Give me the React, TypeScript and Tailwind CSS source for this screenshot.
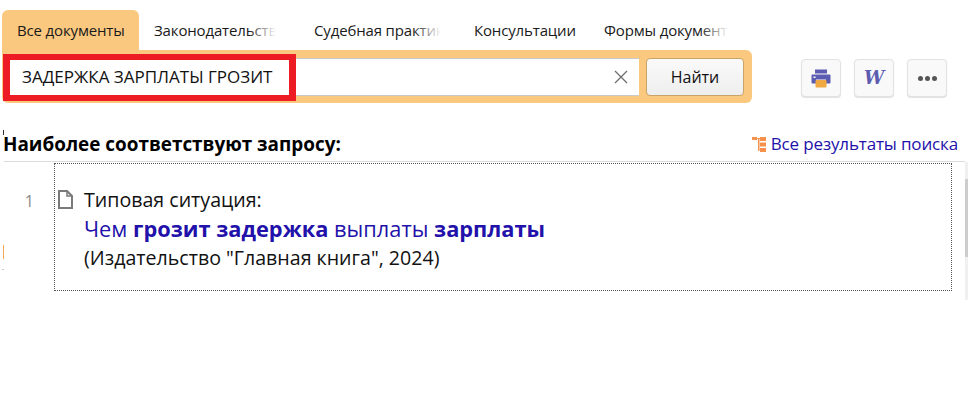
import React from "react";

const font = "font-['Open_Sans','Noto_Sans',sans-serif]";

function Tab({ label, width, clip, active, fade }: { label: string; width: string; clip?: string; active?: boolean; fade?: boolean }) {
  return (
    <div className={`flex h-full items-center whitespace-nowrap pl-[15px] text-[15px] tracking-[-0.15px] text-[#1a1a1a] ${width} ${active ? "rounded-t-[6px] bg-[#fac87f]" : ""}`}>
      <div className={`relative overflow-hidden ${clip ?? ""}`}>
        {label}
        {fade && <div className="absolute right-0 top-0 h-full w-[28px] bg-gradient-to-r from-white/0 to-white" />}
      </div>
    </div>
  );
}

function ToolButton({ children }: { children: React.ReactNode }) {
  return (
    <button className="flex h-[38px] w-[40px] items-center justify-center rounded-[4px] border border-[#e2e2e2] bg-[#f9f9f9] shadow-[0_1px_1px_rgba(0,0,0,0.12)]">
      {children}
    </button>
  );
}

function PrinterIcon() {
  return (
    <svg width="20" height="19" viewBox="0 0 20 19">
      <path d="M4 0.5h12v4H4z" fill="#5c5cb0" />
      <path d="M1.5 5.5h17a1 1 0 0 1 1 1v7a1 1 0 0 1-1 1H15v-4H5v4H1.5a1 1 0 0 1-1-1v-7a1 1 0 0 1 1-1z" fill="#5c5cb0" />
      <rect x="2.5" y="7.5" width="2" height="1.5" fill="#fff" />
      <rect x="4.5" y="11" width="11" height="7.5" rx="1" fill="#f0a843" />
    </svg>
  );
}

function TreeIcon() {
  return (
    <svg width="14" height="15" viewBox="0 0 14 15" fill="#f5914a">
      <rect x="0" y="0" width="5" height="3" />
      <rect x="5" y="1" width="3" height="1" />
      <rect x="6" y="1" width="1.5" height="13" />
      <rect x="8" y="0" width="6" height="4" />
      <rect x="8" y="5.5" width="6" height="4" />
      <rect x="8" y="11" width="6" height="4" />
    </svg>
  );
}

function DocIcon() {
  return (
    <svg width="15" height="19" viewBox="0 0 15 19" fill="none" stroke="#7a7a7a" strokeWidth="2">
      <path d="M1 1h8l5 5v12H1z" />
      <path d="M9 1v5h5" strokeWidth="1.5" />
    </svg>
  );
}

export default function App() {
  return (
    <div className={`relative h-[408px] w-[968px] overflow-hidden bg-white pt-[10px] ${font}`}>
      <div className="ml-[2px] flex h-[40px]">
        <Tab label="Все документы" width="w-[137px]" active />
        <Tab label="Законодательство" width="w-[160px]" clip="w-[122px]" fade />
        <Tab label="Судебная практика" width="w-[160px]" clip="w-[127px]" fade />
        <Tab label="Консультации" width="w-[130px]" />
        <Tab label="Формы документов" width="w-[160px]" clip="w-[124px]" fade />
      </div>

      <div className="flex items-start">
        <div className="relative ml-[2px] flex h-[53px] w-[750px] items-start gap-[7px] rounded-b-[6px] rounded-tr-[6px] bg-[#fac87f] px-[8px] pt-[8px]">
          <div className="flex h-[38px] flex-1 items-center justify-between border-b border-t border-[#c9c9c9] bg-white pl-[12px] pr-[11px]">
            <span className="text-[17px] text-[#111]">ЗАДЕРЖКА ЗАРПЛАТЫ ГРОЗИТ</span>
            <svg width="14" height="14" viewBox="0 0 14 14" stroke="#6e6e6e" strokeWidth="1.3">
              <path d="M1 1l12 12M13 1L1 13" />
            </svg>
          </div>
          <button className="h-[38px] w-[98px] rounded-[4px] border border-[#c9a468] bg-gradient-to-b from-[#fafafa] to-[#eeeeee] text-[16px] text-[#111]">
            Найти
          </button>
          <div className="absolute left-[1px] top-[4px] h-[47px] w-[293px] border-x-[7px] border-y-[6px] border-[#ed1c24]" />
        </div>
        <div className="ml-[49px] mt-[9px] flex gap-[13px]">
          <ToolButton><PrinterIcon /></ToolButton>
          <ToolButton>
            <span className="font-['DejaVu_Serif',serif] text-[18px] font-bold italic leading-none text-[#5c5cb0]">W</span>
          </ToolButton>
          <ToolButton>
            <div className="flex gap-[2px]">
              <div className="h-[5px] w-[5px] rounded-full bg-[#555]" />
              <div className="h-[5px] w-[5px] rounded-full bg-[#555]" />
              <div className="h-[5px] w-[5px] rounded-full bg-[#555]" />
            </div>
          </ToolButton>
        </div>
      </div>

      <div className="ml-[4px] mt-[27px] flex h-[32px] w-[961px] items-center justify-between border-b border-[#dcdcdc] pb-[3px] pr-[7px]">
        <span className="ml-[-1px] text-[18.9px] font-bold text-black">Наиболее соответствуют запросу:</span>
        <span className="flex items-center gap-[5px] text-[17px] tracking-[-0.15px] text-[#2211aa]">
          <TreeIcon />
          Все результаты поиска
        </span>
      </div>

      <div className="mt-px flex">
        <div className="flex w-[54px] justify-end pr-[20px] pt-[28px] text-[16px] leading-[20px] text-[#8a8a8a]">1</div>
        <div className="flex h-[128px] w-[898px] gap-[11px] border border-dotted border-[#555] pl-[3px] pt-[21px]">
          <div className="pt-[5px]"><DocIcon /></div>
          <div className="text-[19.6px] leading-[29px] text-[#111]">
            <div>Типовая ситуация:</div>
            <div className="text-[21.8px] text-[#2211aa]">
              Чем <b>грозит задержка</b> выплаты <b>зарплаты</b>
            </div>
            <div>(Издательство "Главная книга", 2024)</div>
          </div>
        </div>
      </div>

      {/* края соседних элементов и полоса прокрутки */}
      <div className="absolute left-[3px] top-[130px] h-[5px] w-px bg-[#333]" />
      <div className="absolute left-[3px] top-[245px] h-[14px] w-px bg-[#f3a95c]" />
      <div className="absolute left-[2px] top-[269px] h-px w-[2px] bg-[#ccc]" />
      <div className="absolute left-[965px] top-[162px] h-[138px] w-[3px] bg-[#f0f0f0]">
        <div className="mt-[17px] h-[78px] w-full bg-[#cdcdcd]" />
      </div>
    </div>
  );
}
